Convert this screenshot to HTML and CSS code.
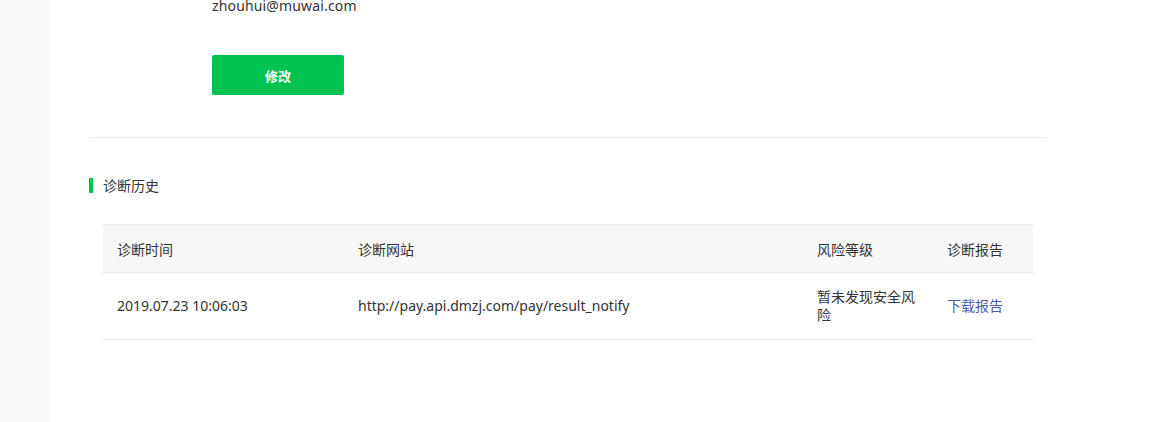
FILE: index.html
```html
<!DOCTYPE html>
<html lang="zh">
<head>
<meta charset="utf-8">
<title>诊断历史</title>
<link rel="stylesheet" href="styles.css">
</head>
<body>
<div class="layout">
  <aside class="sidebar"></aside>
  <main class="main">
    <section class="account">
      <div class="email">zhouhui@muwai.com</div>
      <button class="btn-primary" type="button">修改</button>
    </section>
    <hr class="divider">
    <section class="history">
      <h2 class="section-title">诊断历史</h2>
      <table class="table">
        <colgroup>
          <col class="c-time">
          <col class="c-site">
          <col class="c-risk">
          <col class="c-report">
        </colgroup>
        <thead>
          <tr>
            <th>诊断时间</th>
            <th>诊断网站</th>
            <th>风险等级</th>
            <th>诊断报告</th>
          </tr>
        </thead>
        <tbody>
          <tr>
            <td>2019.07.23 10:06:03</td>
            <td>http://pay.api.dmzj.com/pay/result_notify</td>
            <td>暂未发现安全风险</td>
            <td><a class="link" href="#">下载报告</a></td>
          </tr>
        </tbody>
      </table>
    </section>
  </main>
</div>
</body>
</html>
```

FILE: styles.css
```css
html, body {
  margin: 0;
  padding: 0;
  height: 100%;
  overflow: hidden;
}
body {
  font-family: "Noto Sans", "Noto Sans CJK SC", sans-serif;
  font-size: 14px;
  color: #333;
  background: #fff;
}
.layout {
  display: flex;
  height: 422px;
}
.sidebar {
  width: 49px;
  flex: none;
  background: #f8f9fb;
}
.main {
  flex: 1;
  padding-left: 40px;
}
.account {
  padding-left: 123px;
  margin-top: -4px;
}
.email {
  font-size: 14px;
  line-height: 20px;
  color: #333;
  letter-spacing: 0.15px;
}
.btn-primary {
  display: block;
  margin-top: 39px;
  width: 132px;
  height: 40px;
  border: 0;
  border-radius: 2px;
  background: #00c250;
  color: #fff;
  font-family: inherit;
  font-size: 13px;
  font-weight: 700;
  padding: 0;
}
.divider {
  width: 958px;
  margin: 42px 0 0;
  border: 0;
  border-top: 1px solid #ebebeb;
  height: 0;
}
.section-title {
  margin: 40px 0 0;
  font-size: 14px;
  font-weight: 400;
  line-height: 15px;
  height: 15px;
  border-left: 4px solid #00c250;
  padding-left: 10px;
  color: #333;
}
.table {
  margin: 31px 0 0 13px;
  width: 932px;
  border-collapse: collapse;
  table-layout: fixed;
}
.c-time { width: 241px; }
.c-site { width: 459px; }
.c-risk { width: 130px; }
.c-report { width: 102px; }
.table th {
  background: #f8f8f8;
  font-weight: 400;
  text-align: left;
  height: 48px;
  padding: 0 15px;
  font-size: 14px;
  border-top: 1px solid #ebebeb;
  border-bottom: 1px solid #ebebeb;
  box-sizing: border-box;
}
.table td {
  padding: 15px 15px;
  line-height: 18px;
  font-size: 14px;
  vertical-align: middle;
  border-bottom: 1px solid #ebebeb;
}
.link {
  color: #4a5fa8;
  text-decoration: none;
}
```
